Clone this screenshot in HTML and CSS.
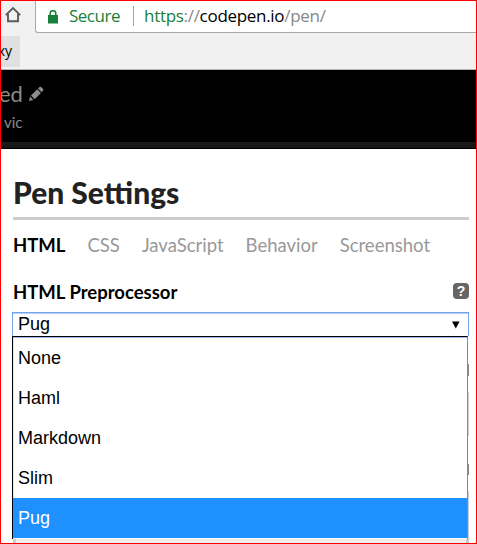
FILE: index.html
```html
<!DOCTYPE html>
<html lang="en">
<head>
<meta charset="utf-8">
<title>Pen Settings</title>
<link rel="stylesheet" href="styles.css">
</head>
<body>
<div class="frame">
  <div class="toolbar">
    <svg class="home" width="18" height="18" viewBox="0 0 18 18"><path d="M1.8 9.2 9 2l7.200 7.200M4 8v7.200h10V8" fill="none" stroke="#5a5a5a" stroke-width="1.900"/></svg>
    <div class="address">
      <svg class="lock" width="10" height="14" viewBox="0 0 10 14"><path d="M0 5h10v8.500H0z" fill="#188038"/><path d="M2.200 6V3.500a2.800 2.800 0 0 1 5.600 0V6" fill="none" stroke="#188038" stroke-width="1.500"/></svg>
      <span class="secure">Secure</span>
      <span class="divider"></span>
      <span class="url"><span class="scheme">https</span>://<span class="host">codepen.io</span>/pen/</span>
    </div>
  </div>
  <div class="bookmarks"><div class="bookmark">xy</div></div>
  <header class="header">
    <div class="pen-title"><span>ed</span><svg width="16" height="16" viewBox="0 0 16 16" fill="#8c8c8c"><path d="M1 15l1-4.500L5.500 14zM3 9.500l6.200-6.200 3.700 3.700-6.200 6.200zM10 2.500 11.500 1q.8-.7 1.600 0l2 2q.8.8 0 1.600l-1.500 1.600z"/></svg></div>
    <div class="author">vic</div>
  </header>
  <main class="settings">
    <h1>Pen Settings</h1>
    <nav class="tabs">
      <span class="tab active">HTML</span><span class="tab css">CSS</span><span class="tab js">JavaScript</span><span class="tab behavior">Behavior</span><span class="tab">Screenshot</span>
    </nav>
    <div class="label-row"><h2>HTML Preprocessor</h2><span class="help">?</span></div>
    <div class="select"><span>Pug</span><svg width="8" height="8" viewBox="0 0 8 8"><path d="M0 .5h7.600L3.800 7.500z"/></svg></div>
    <div class="menu-row">
      <ul class="menu">
        <li>None</li><li>Haml</li><li>Markdown</li><li>Slim</li><li class="selected">Pug</li>
      </ul>
      <div class="edge"></div>
    </div>
    <div class="field"></div>
  </main>
</div>
</body>
</html>
```

FILE: styles.css
```css
* { box-sizing: border-box; }
body { margin: 0; background: #fff; }
.frame { width: 477px; height: 544px; border: 1px solid #f00; overflow: hidden; background: #fff; font-family: Lato, sans-serif; }
.toolbar { display: flex; height: 32px; background: #f1f1f1; }
.home { margin: 5px 0 0 3px; flex: none; }
.address { flex: 1; margin-left: 13px; height: 32px; background: #fff; border: solid #a9a9a9; border-width: 0 0 1px 1px; border-bottom-left-radius: 3px; display: flex; font: 17px/30px "Open Sans", sans-serif; white-space: nowrap; }
.lock { margin: 9px 11px 0 12px; flex: none; }
.secure { color: #188038; width: 64px; letter-spacing: -0.5px; }
.divider { width: 1px; height: 20px; margin: 5px 10px 0 0; background: #a8a8a8; }
.url { color: #888; letter-spacing: -0.3px; }
.scheme { color: #188038; }
.host { color: #000; }
.bookmarks { height: 37px; padding-top: 3px; background: #f1f1f1; border-bottom: 1px solid #b6b6b6; }
.bookmark { width: 19px; height: 31px; background: #e0e0e0; font: 14px/29px "Open Sans", sans-serif; direction: rtl; padding-right: 8px; overflow: hidden; }
.header { height: 79px; padding-top: 11px; background: linear-gradient(#1b1b1b, #161616) 0 72px / 100% 6px no-repeat #000; color: #8c8c8c; }
.pen-title { display: flex; height: 26px; font-size: 22px; line-height: 26px; }
.pen-title span { width: 27px; margin-left: -2px; }
.pen-title svg { margin: 5px 0 0 2px; }
.author { padding-left: 3px; font-size: 15px; line-height: 30px; }
.settings { padding: 23px 7px 0 11px; }
h1 { margin: 0 0 0 1px; height: 48px; border-bottom: 3px solid #ccc; font-size: 30px; line-height: 40px; font-weight: 900; color: #222; white-space: nowrap; }
.tabs { display: flex; margin-left: 1px; padding-top: 12px; height: 50px; font-size: 18.5px; line-height: 26px; color: #999; white-space: nowrap; }
.tab { margin-right: 22px; }
.active { color: #000; font-weight: 700; }
.label-row { display: flex; justify-content: space-between; height: 42px; padding: 10px 0 0 1px; }
h2 { margin: 0; font-size: 18.5px; line-height: 25px; font-weight: 700; }
.help { width: 16px; height: 16px; margin-top: 3px; border-radius: 4px; background: #666; color: #fff; text-align: center; font: bold 14px/16px "Liberation Sans", sans-serif; }
.select { display: flex; justify-content: space-between; height: 24px; border: 1px solid #75a3ea; border-bottom: 0; padding: 0 8px 0 5px; box-shadow: inset 0 1px #b7cff5; font: 18px/23px "Liberation Sans", sans-serif; }
.select svg { margin-top: 8px; }
.menu-row { display: flex; height: 203px; }
.menu { flex: 1; margin: 0; padding: 0; list-style: none; border-left: 1px solid #000; border-top: 1px solid #000; border-right: 1px solid #6f8dc5; box-shadow: inset 0 1px #9abcf1, inset 1px 0 #d9e6fb; font: 18px/40px "Liberation Sans", sans-serif; padding-top: 1px; }
.menu li { height: 40px; padding-left: 5px; }
.menu .selected { background: #1e90ff; color: #fff; }
.edge { width: 1px; background: linear-gradient(#fff 28px, #888 28px 40px, #fff 40px 56px, #ccc 56px 100px, #fff 100px 128px, #888 128px 139px, #fff 139px 155px, #ccc 155px); }
.field { height: 6px; margin-left: 1px; border: solid #ccc; border-width: 0 3px; background: #eee; }
```
